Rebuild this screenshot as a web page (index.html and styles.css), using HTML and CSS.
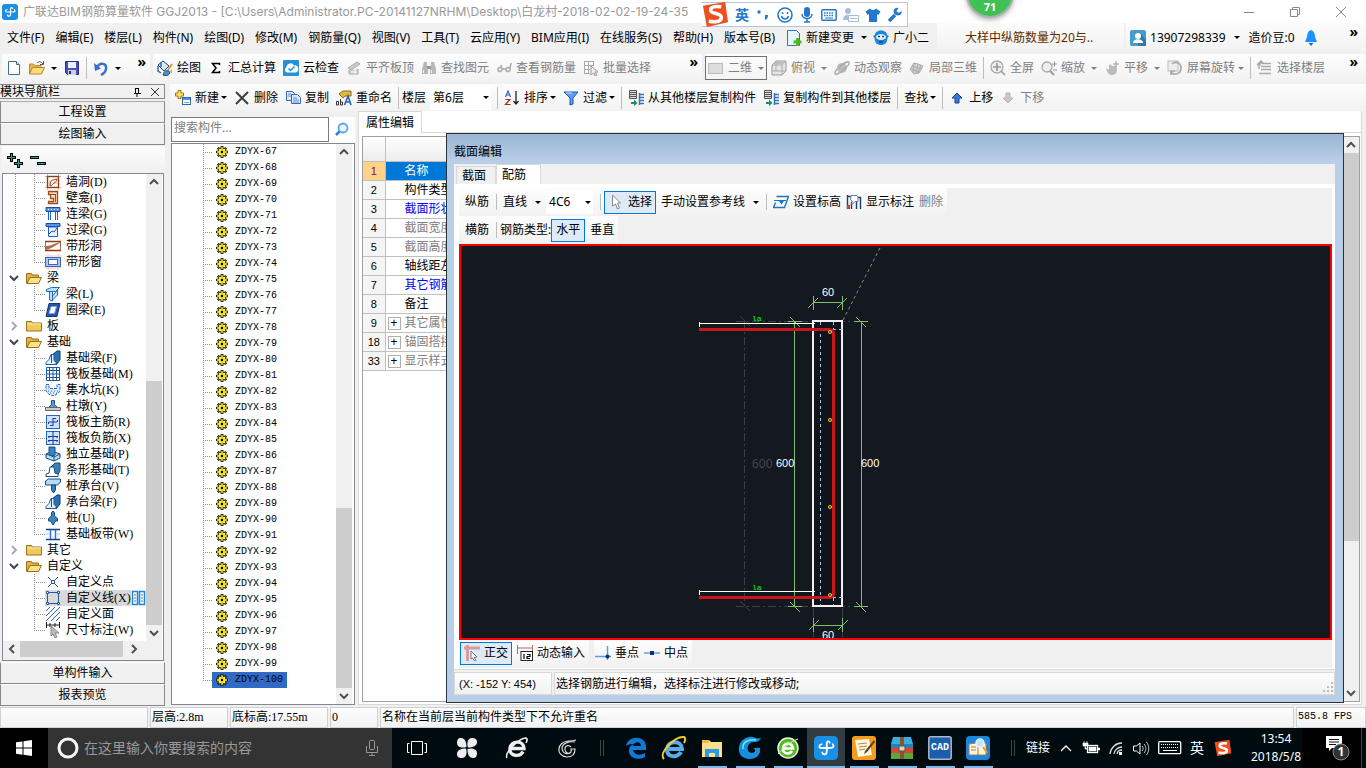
FILE: index.html
```
<!DOCTYPE html>
<html lang="zh-CN">
<head>
    <meta charset="UTF-8">
    <meta name="viewport" content="width=device-width, initial-scale=1.0">
    <title>广联达BIM钢筋算量软件 GGJ2013</title>
    <link rel="stylesheet" href="styles.css">
</head>
<body>
    <!-- icon sprite -->
    <svg class="sprite" aria-hidden="true">
        <symbol id="app" viewBox="0 0 16 16"><rect width="16" height="16" rx="3" fill="#1a8fe6"/><path d="M10.500 4.500C10 3 8.500 3.500 8.500 5v5.500c0 2-2.500 2.500-3 .5M5 5.500C3 6 3 8 5 8h5.500c2.500 0 3-1 2-2.500" fill="none" stroke="#fff" stroke-width="1.200" stroke-linecap="round"/></symbol>
        <symbol id="new" viewBox="0 0 16 16"><path d="M2.500 1.500h8l3 3v10h-11z" fill="#fff" stroke="#456a9c"/><path d="M10.500 1.500v3h3" fill="#cfe0f5" stroke="#456a9c"/></symbol>
        <symbol id="open" viewBox="0 0 16 16"><path d="M.5 14V4h4L6 5.500h6V8" fill="#e8b84a" stroke="#b8862c"/><path d="M.5 14l3-6.500h12l-3 6.500z" fill="#ffdb7a" stroke="#b8862c"/><path d="M8 3c2-2 4-1.500 6 1M14.500 1v3.500H11" fill="none" stroke="#555"/></symbol>
        <symbol id="save" viewBox="0 0 16 16"><path d="M1.500 1.500h13v13h-11l-2-2z" fill="#4a50b8" stroke="#2c2f80"/><rect x="4" y="2" width="8" height="6" fill="#e8f0fc"/><rect x="4" y="10" width="8" height="5" fill="#c9d0e8"/><rect x="5" y="11" width="2" height="3" fill="#2c2f80"/></symbol>
        <symbol id="undo" viewBox="0 0 16 16"><path d="M4 7c3-5 10-4 9 2-.5 3-3 5-5 6" fill="none" stroke="#3a6fd0" stroke-width="2.400"/><path d="M1 3l1 8 6-2.500z" fill="#3a6fd0"/></symbol>
        <symbol id="paint" viewBox="0 0 16 16"><path d="M1 5l5-4 6 5-5 5z" fill="#dce8f6" stroke="#23446c"/><path d="M4 2v5M1 6v5l3 2" fill="none" stroke="#3b6aa5" stroke-width="1.500"/><path d="M15 4l-4 6" stroke="#d3a02c" stroke-width="2"/><path d="M6 15c1-4 3-5 6-4l1 2c-2 3-4 3-7 2z" fill="#4a8fe0" stroke="#23446c"/><path d="M12 12l3-3v4z" fill="#ddb340"/></symbol>
        <symbol id="sigma" viewBox="0 0 16 16"><path d="M11.500 5V3.500H4.500L8 8l-3.500 4.500h7V11" fill="none" stroke="#000" stroke-width="1.500"/></symbol>
        <symbol id="cloud" viewBox="0 0 16 16"><rect width="16" height="16" rx="1" fill="#2591d8"/><path d="M4 12.500a3 3 0 0 1-.5-5.500A4 4 0 0 1 11 5.500a3.500 3.500 0 0 1 1.500 7z" fill="#fff"/><path d="M5.500 8.500l2 2 4-4" fill="none" stroke="#2591d8" stroke-width="1.500"/></symbol>
        <symbol id="align" viewBox="0 0 16 16"><path d="M2 8l9-6 3 2-9 6zM3 10v4h9V9" fill="#ccc" stroke="#aaa"/><path d="M5 12h6M9 9v5" stroke="#fff"/></symbol>
        <symbol id="find" viewBox="0 0 16 16"><path d="M3 2h3v3l1 3v6H1V9zM10 2h3l2 7v5H9V8l1-3z" fill="#b8b8b8"/><path d="M6 6h4v3H6z" fill="#999"/><path d="M2.500 10v3M10.500 10v3" stroke="#eee"/></symbol>
        <symbol id="glasses" viewBox="0 0 16 16"><path d="M6 9a2 2 0 1 0-4 1 2 2 0 0 0 4-1L5 5M14 9a2 2 0 1 0-4 1 2 2 0 0 0 4-1l1-6M6 9h4" fill="none" stroke="#aaa" stroke-width="1.500"/></symbol>
        <symbol id="batch" viewBox="0 0 16 16"><path d="M1 1.500h10M1 5.500h10M1 9.500h6M1 13.500h6M1.500 1v13M5.500 1v13M10.500 1v4" stroke="#aaa" fill="none"/><path d="M8 6l7 6h-3l2 3-2 1-1-3-3 2z" fill="#eee" stroke="#999"/></symbol>
        <symbol id="rect2d" viewBox="0 0 16 16"><rect x=".5" y="3.500" width="14" height="10" fill="#ddd" stroke="#bbb"/></symbol>
        <symbol id="cube" viewBox="0 0 16 16"><path d="M1 5l4-4h10v10l-4 4H1z" fill="#e6e6e6" stroke="#999"/><path d="M1 5h10v10M11 5l4-4M5 1v10H1M5 11h10" fill="none" stroke="#aaa"/><path d="M2 4l3-3h9l-3 3z" fill="#bbb"/></symbol>
        <symbol id="orbit" viewBox="0 0 16 16"><circle cx="8" cy="8" r="5" fill="#bcbcbc"/><ellipse cx="8" cy="8" rx="9" ry="2.500" transform="rotate(-40 8 8)" fill="none" stroke="#aaa" stroke-width="1.300"/></symbol>
        <symbol id="part3d" viewBox="0 0 16 16"><path d="M1 9l4-6 4 1 5 2-4 7-5 1z" fill="#d6d6d6" stroke="#aaa"/><path d="M5 3l-1 10M9 4l-2 9M3 6l10 3M2 9l9 3M12 5l-3 8" stroke="#aaa" fill="none"/></symbol>
        <symbol id="full" viewBox="0 0 16 16"><circle cx="7" cy="7" r="6" fill="#eee" stroke="#aaa" stroke-width="1.300"/><path d="M7 3v8M3 7h8M11 11l4 4" stroke="#999" stroke-width="1.700"/></symbol>
        <symbol id="zoom" viewBox="0 0 16 16"><circle cx="6" cy="7" r="5" fill="#eee" stroke="#aaa" stroke-width="1.300"/><path d="M9 11l4 4" stroke="#999" stroke-width="2"/><path d="M11 4h5M13.500 1.500v5M12 10h4" stroke="#999"/></symbol>
        <symbol id="hand" viewBox="0 0 16 16"><path d="M2 9c2-1 3 1 3 1V5c2-1 2 0 3 1 3-1 5 0 5 3 0 4-2 6-5 6s-4-2-6-6z" fill="#bbb"/><path d="M12 1v6M9 4h6" stroke="#999"/></symbol>
        <symbol id="rotate" viewBox="0 0 16 16"><rect x="1" y="1" width="10" height="10" fill="#eee" stroke="#bbb"/><path d="M4 12c3 4 10 2 10-4S8 1 5 4M4 15v-4h4" fill="none" stroke="#aaa" stroke-width="1.700"/></symbol>
        <symbol id="floors" viewBox="0 0 16 16"><path d="M0 5l4-4 2 2H3v2zM5 3.500h9M4 6.500h10M4 9.500h10M2 13.500h12M2 6v3" fill="#bbb" stroke="#aaa" stroke-width="1.500"/></symbol>
        <symbol id="add" viewBox="0 0 16 16"><path d="M3 .5h3V3h2.500v3H6v2.500H3V6H.5V3H3z" fill="#ffe066" stroke="#9a7a10"/><rect x="7.500" y="7.500" width="8" height="7" fill="#fff" stroke="#2c66b8"/><path d="M8 9h7" stroke="#4f91ea" stroke-width="2"/><path d="M9 12.500h5" stroke="#8aa"/></symbol>
        <symbol id="del" viewBox="0 0 16 16"><path d="M2 2l12 12M14 2L2 14" stroke="#3c3c44" stroke-width="2"/></symbol>
        <symbol id="copy" viewBox="0 0 16 16"><path d="M1.500 1.500h6l2 2v7h-8z" fill="#dce9fb" stroke="#3a68b0"/><path d="M6.500 4.500h6l3 3v6h-9z" fill="#dce9fb" stroke="#3a68b0"/><path d="M8 8h4M8 10h6M8 12h6M3 4h3M3 6h3" stroke="#5c8cd8"/></symbol>
        <symbol id="rename" viewBox="0 0 16 16"><path d="M3 4l4-3h8v5H9L7 8z" fill="#e2b93c" stroke="#876919"/><path d="M.5 15v-3.500h2V15zM4.500 9v6h2v-3h-2" fill="none" stroke="#333"/><path d="M8.500 15L12 6l3 9M10 12h4" fill="none" stroke="#2863bd" stroke-width="1.600"/></symbol>
        <symbol id="sort" viewBox="0 0 16 16"><path d="M1.500 7L4 1l2.500 6M2.500 5h3" fill="none" stroke="#3a62b5" stroke-width="1.200"/><path d="M1.500 9.500h4.500l-4.500 5h5" fill="none" stroke="#a02c2c" stroke-width="1.200"/><path d="M12 1v13M9.500 11l2.500 3 2.500-3" fill="none" stroke="#222" stroke-width="1.300"/></symbol>
        <symbol id="filter" viewBox="0 0 16 16"><path d="M1 2h14L10 8v6l-3 1V8z" fill="#5f9ef0" stroke="#1f58ac"/><path d="M3 3h6" stroke="#cfe3ff"/></symbol>
        <symbol id="floorcopy" viewBox="0 0 16 16"><path d="M1.500.5h7v8h-7z" fill="#ddd" stroke="#555"/><path d="M2 2.500h6M2 4.500h6M2 6.500h6" stroke="#555"/><path d="M3 12h3V9.500L9.500 13 6 16v-2H3z" fill="#14945a"/><path d="M11 4.500h5M11 7.500h5M11 10.500h5M11 13.500h5M11.500 3v12" stroke="#3872b8" stroke-width="1.500"/></symbol>
        <symbol id="up" viewBox="0 0 16 16"><path d="M8 3l5 5h-3v5H6V8H3z" fill="#3c78dc" stroke="#174291"/></symbol>
        <symbol id="down" viewBox="0 0 16 16"><path d="M8 13L3 8h3V3h4v5h3z" fill="#c9c9c9" stroke="#b5b5b5"/></symbol>
        <symbol id="change" viewBox="0 0 16 16"><path d="M1.500.5h9l3 3v12h-12z" fill="#e8f4fc" stroke="#2f77b0"/><path d="M10 8h3v2.500h2.500v3H13V16h-3v-2.500H7.500v-3H10z" fill="#55b82a"/></symbol>
        <symbol id="robot" viewBox="0 0 16 16"><path d="M2 5c0-6 12-6 12 0l2 1-1.500 2C14 13 12 15 8 15S2 13 1.500 8L0 6z" fill="#1c86d6"/><ellipse cx="8" cy="7" rx="5" ry="3" fill="#e4f4ff"/><path d="M5 6.500h2M9 6.500h2M6 12h4" stroke="#0a4d8c" stroke-width="1.500"/></symbol>
        <symbol id="user" viewBox="0 0 16 16"><rect width="16" height="16" rx="2" fill="#459ccb"/><path d="M8 8l4-3 4 5v6H8z" fill="#2f7ba6"/><circle cx="8" cy="6" r="3" fill="#fff"/><path d="M3 13c0-5 10-5 10 0z" fill="#fff"/></symbol>
        <symbol id="bell" viewBox="0 0 16 16"><path d="M8 0c-3 1-4 4-4 7l-2 5h12l-2-5c0-3-1-6-4-7z" fill="#1e90ff"/><path d="M5.500 13h5L8 16z" fill="#1770cc"/></symbol>
        <symbol id="search" viewBox="0 0 16 16"><circle cx="9" cy="6" r="4.500" fill="#eaf6ff" stroke="#54a6e4" stroke-width="1.800"/><path d="M5.500 9.500L2 13" stroke="#3182cc" stroke-width="2.500"/></symbol>
        <symbol id="gear" viewBox="0 0 16 16"><path d="M8 0v16M0 8h16M2.500 2.500l11 11M13.500 2.500l-11 11" stroke="#000" stroke-width="3.600"/><circle cx="8" cy="8" r="6" fill="#000"/><path d="M8 1v14M1 8h14M3.500 3.500l9 9M12.500 3.500l-9 9" stroke="#ffef28" stroke-width="1.800"/><circle cx="8" cy="8" r="4" fill="none" stroke="#ffef28" stroke-width="1.600"/><circle cx="8" cy="8" r="1.600" fill="#000"/></symbol>
        <symbol id="folder" viewBox="0 0 16 16"><path d="M.5 3.500h5l1 1.500h9v8H.5z" fill="#f2c75c" stroke="#99701c"/><path d="M1 6h14" stroke="#fff0bd"/></symbol>
        <symbol id="folder-open" viewBox="0 0 16 16"><path d="M.5 13.500v-10h5l1 1.500h6v3" fill="#e5b040" stroke="#99701c"/><path d="M1 13.500l3-6h11.500l-3 6z" fill="#ffe08a" stroke="#99701c"/></symbol>
        <!-- module tree -->
        <symbol id="t-hole" viewBox="0 0 16 16"><path d="M0 2.500h16M0 13.500h16M2.500 0v16M13.500 0v16" stroke="#ffb08a"/><rect x="2.500" y="2.500" width="11" height="11" fill="#fff" stroke="#8a3f18" stroke-width="1.400"/><path d="M3 9h4M9 9h4M5 6v3" stroke="#ffb08a"/><path d="M5 12c0-3 1-6 3-6s2-1 4-1c0 2-1 3-3 4s-1 2-4 3z" fill="#fff" stroke="#8a3f18"/></symbol>
        <symbol id="t-niche" viewBox="0 0 16 16"><path d="M3.500 1.500h9v12h-9v-2h5v-3h-3v-4h-2z" fill="#ffd9bd" stroke="#a14c1c" stroke-width="1.300"/><path d="M6 4.500h4M10.500 4v8" stroke="#a14c1c"/></symbol>
        <symbol id="t-beam" viewBox="0 0 16 16"><path d="M1 1.500h14v4H1z" fill="#5793e6" stroke="#1c4ea3"/><path d="M3.500 6v8M5.500 6v8M10.500 6v8M12.500 6v8" stroke="#1c60c9"/><path d="M3 3.500h1M6 3.500h1M9 3.500h1M12 3.500h1" stroke="#fff"/></symbol>
        <symbol id="t-lintel" viewBox="0 0 16 16"><path d="M1 1.500h14v3H1z" fill="#5793e6" stroke="#1c4ea3"/><path d="M3.500 5h9v9.500h-9z" fill="#e6f0ff" stroke="#1c60c9"/><path d="M4 12l3-3 2 1 3-4" fill="none" stroke="#1c60c9"/></symbol>
        <symbol id="t-striphole" viewBox="0 0 16 16"><path d="M0 3.500h16v9H0z" fill="#fff" stroke="#8a3f18" stroke-width="1.500"/><path d="M1 8c3 0 6-1 8-2s4-1 6-2v1c-4 2-9 6-14 7z" fill="#b56a3f"/></symbol>
        <symbol id="t-stripwin" viewBox="0 0 16 16"><path d="M0 2h16M0 14h16M3 0v16M13 0v16" stroke="#ffc4b8"/><rect x=".5" y="3.500" width="15" height="9" fill="#a9c8f7" stroke="#3a67bd"/><rect x="3.500" y="5.500" width="9" height="5" fill="#fff" stroke="#3a67bd"/></symbol>
        <symbol id="t-l" viewBox="0 0 16 16"><path d="M1.500 3.500l5-2h8l-4 4h-9zM4.500 6v8l3 1V6M7.500 10l5-6v5l-5 5" fill="#bfe0fa" stroke="#1c6fb9"/></symbol>
        <symbol id="t-ring" viewBox="0 0 16 16"><path d="M4 1.500h11L12 14.500H1z" fill="#2554a8" stroke="#123474"/><path d="M6 4.500h5.500L9.500 11.500H4z" fill="#fff" stroke="#76a5ee"/></symbol>
        <symbol id="t-fbeam" viewBox="0 0 16 16"><path d="M7 5l5-4h3v9l-4 5" fill="#2a6fae" stroke="#123e68"/><path d="M1 14.500v-2l3-3 2-5h3v6l2 2v2z" fill="#e3f1ff" stroke="#1c5a9c"/><path d="M6.500 5v8" stroke="#1c5a9c"/></symbol>
        <symbol id="t-raft" viewBox="0 0 16 16"><path d="M1.500 1.500h13v13h-13zM4.500 1v14M11.500 1v14M1 4.500h14M1 11.500h14M8 1v14M1 8h14" fill="none" stroke="#1c5a9c"/></symbol>
        <symbol id="t-pit" viewBox="0 0 16 16"><path d="M1 2.500h3v4h8v-4h3v6c-2 4-5 5-7 5s-5-1-7-5z" fill="#dcebff" stroke="#2c6bc4" stroke-dasharray="3 1"/><path d="M3 9h1M6 9h1M9 9h1M12 9h1M5 11h1M8 11h1M11 11h1" stroke="#2c6bc4"/></symbol>
        <symbol id="t-pier" viewBox="0 0 16 16"><path d="M6.500 2.500h3v4l3 3h-9l3-3z" fill="#5f93d3" stroke="#27508a"/><path d="M.5 9.500h15v3H.5z" fill="#ccc" stroke="#666"/></symbol>
        <symbol id="t-main" viewBox="0 0 16 16"><rect x="1.500" y="1.500" width="13" height="13" fill="#cfe2ff" stroke="#2b62cc"/><path d="M8 4v8M4 8h8M8 4.500h3M3.500 8v2M12.500 6v2M5 11.500h3" fill="none" stroke="#143f9e"/></symbol>
        <symbol id="t-neg" viewBox="0 0 16 16"><rect x="1.500" y="1.500" width="13" height="13" fill="#cfe2ff" stroke="#2b62cc"/><path d="M8 1v14M3 6.500h10M3 10.500h10M4 6v2M12 6v2M4 10v2M12 10v2" stroke="#143f9e"/></symbol>
        <symbol id="t-indep" viewBox="0 0 16 16"><path d="M1 8l6-3 8 3v4l-6 3-8-3z" fill="#b6dcf5" stroke="#164c7c"/><path d="M4 1h6v8l-3 1-3-2z" fill="#3c84c0" stroke="#164c7c"/><path d="M1 8l8 3 6-3M9 11v4" fill="none" stroke="#164c7c"/></symbol>
        <symbol id="t-strip" viewBox="0 0 16 16"><path d="M6 5l4-4h5v8l-3 5" fill="#3c7fb8" stroke="#164c7c"/><path d="M1 14.500V12l3-1 1-6h4l1 6 3 1v2.500z" fill="#fff" stroke="#164c7c"/></symbol>
        <symbol id="t-cap" viewBox="0 0 16 16"><path d="M.5 3l3-2h12v3l-3 3H.5z" fill="#b6dcf5" stroke="#164c7c"/><path d="M6.500 7h4v5l-2 3-2-3z" fill="#3c7fb8" stroke="#164c7c"/></symbol>
        <symbol id="t-pile" viewBox="0 0 16 16"><path d="M6.500 2.500L8 1l1.500 1.500V6l3 2.500V11h-2L8 15l-2.500-4h-2V8.500l3-2.500z" fill="#3c84c0" stroke="#164c7c"/></symbol>
        <symbol id="t-band" viewBox="0 0 16 16"><path d="M1 3.500h14M1 13.500h14" stroke="#163f86" stroke-width="1.500"/><path d="M5.500 4v9M10.500 4v9" stroke="#2b74d6" stroke-width="1.500"/><path d="M1 8h3M12 8h3" stroke="#9ac0f2"/></symbol>
        <symbol id="t-point" viewBox="0 0 16 16"><path d="M3 3l4 4M13 3L9 7M3 13l4-4M13 13L9 9" stroke="#2458b0"/><rect x="6.500" y="6.500" width="3" height="3" fill="#fff" stroke="#2458b0"/></symbol>
        <symbol id="t-line" viewBox="0 0 16 16"><path d="M2.500 2.500h11v11h-11z" fill="none" stroke="#2458b0"/><path d="M1.500 1.500h2v2h-2zM12.500 1.500h2v2h-2zM1.500 12.500h2v2h-2zM12.500 12.500h2v2h-2z" fill="#fff" stroke="#2458b0"/></symbol>
        <symbol id="t-area" viewBox="0 0 16 16"><path d="M1 5l4-4M1 10l9-9M1 15L15 1M6 15l9-9M11 15l4-4" stroke="#2b62cc"/></symbol>
        <symbol id="t-dim" viewBox="0 0 16 16"><path d="M1.500 0v6M14.500 0v6M2 3h12M5 1v4M10 1v4" stroke="#222"/><path d="M6 4l8 7h-4l2 4-2 1-2-4-2 2z" fill="#bbb" stroke="#888"/></symbol>
        <symbol id="cols" viewBox="0 0 16 16"><path d="M1.500 1.500h5v13h-5zM8.500 1.500h5v13h-5z" fill="#fff" stroke="#1c83d8" stroke-width="1.500"/><path d="M3 5h2M3 8h2M3 11h2M10 5h2M10 8h2M10 11h2" stroke="#1c83d8"/></symbol>
        <!-- section editor -->
        <symbol id="cursor" viewBox="0 0 16 16"><path d="M4.500 1v11l3-2 2 5 2-1-2-5h3z" fill="#fff" stroke="#888"/></symbol>
        <symbol id="level" viewBox="0 0 16 16"><path d="M3.500 2.500h12l-4 11H.5l2-5" fill="none" stroke="#1c75c4" stroke-width="1.400"/><path d="M1 6.500h12" stroke="#1c75c4"/><path d="M6 7h5l-2.500 3.500z" fill="#1c75c4"/></symbol>
        <symbol id="showdim" viewBox="0 0 16 16"><path d="M1.500 1v14M1 2.500h4M14.500 3v12M12 3.500h3M5.500 15V8M10.500 15V8" fill="none" stroke="#1c3c70" stroke-width="1.400"/><path d="M5 1.500h6l1 2v4H9l-3 3V7L4.500 6z" fill="#fff" stroke="#6a7ea0"/><path d="M1 11h3v4H1z" fill="#d2451e"/></symbol>
        <symbol id="ortho" viewBox="0 0 16 16"><path d="M0 3h16M3.500 0v16" stroke="#dc9a9a" stroke-width="3"/><path d="M7 6l6 6-3 .5 2 3-1.500.5-2-3L7 14z" fill="#fff" stroke="#777"/></symbol>
        <symbol id="dynin" viewBox="0 0 16 16"><path d="M.5 0v9M15.500 0v7M1 3h14" stroke="#a87272"/><rect x="4" y="6.500" width="11.500" height="9" fill="#fff" stroke="#222"/><path d="M7 9v5M10 9.500h3v2h-3v2h3" stroke="#000" fill="none" stroke-width="1.200"/></symbol>
        <symbol id="perp" viewBox="0 0 16 16"><path d="M0 11.500h16M12.500 1v14" stroke="#5a9ce6" stroke-width="1.400"/><circle cx="12.500" cy="11.500" r="2" fill="#0e2f86"/></symbol>
        <symbol id="mid" viewBox="0 0 16 16"><path d="M0 8h16" stroke="#5a9ce6" stroke-width="1.400"/><rect x="6" y="6" width="4" height="4" fill="#0e2f86"/></symbol>
    </svg>

    <header class="titlebar">
        <svg class="icon"><use href="#app"/></svg>
        <h1>广联达BIM钢筋算量软件 GGJ2013 - [C:\Users\Administrator.PC-20141127NRHM\Desktop\白龙村-2018-02-02-19-24-35</h1>
        <div class="window-buttons">
            <button aria-label="最小化"><svg width="12" height="12"><path d="M1 6.500h10" stroke="#888"/></svg></button>
            <button aria-label="还原"><svg width="12" height="12"><path d="M1.500 3.500h7v7h-7zM3.500 3V1.500h7v7H9" fill="none" stroke="#888"/></svg></button>
            <button aria-label="关闭"><svg width="12" height="12"><path d="M1 1l10 10M11 1L1 11" stroke="#888"/></svg></button>
        </div>
    </header>

    <!-- floating input method bar and assistant ball -->
    <div class="ime">
        <svg class="ime-logo" viewBox="0 0 28 28"><path d="M1 5L24 1l3 21-22 5z" fill="#f04e1e"/><path d="M20 6c-6-1-12 0-11 4s11 2 11 7-7 5-13 4" fill="none" stroke="#fff" stroke-width="3.600"/></svg>
        <b>英</b>
        <svg viewBox="0 0 16 16"><circle cx="4" cy="5" r="1.700" fill="#2478cc"/><path d="M10 8h3c0 3-1 4-3 5" fill="#2478cc"/></svg>
        <svg viewBox="0 0 16 16"><circle cx="8" cy="8" r="7" fill="none" stroke="#2478cc" stroke-width="1.600"/><path d="M5.500 5v2M10.500 5v2M4.500 9c1 4 6 4 7 0" fill="none" stroke="#2478cc" stroke-width="1.500"/></svg>
        <svg viewBox="0 0 16 16"><rect x="5" y="0" width="6" height="10" rx="3" fill="#2478cc"/><path d="M3 7c0 6 10 6 10 0M8 12v3M5 15h6" fill="none" stroke="#2478cc" stroke-width="1.500"/></svg>
        <svg viewBox="0 0 16 16"><rect x=".8" y="2.800" width="14.400" height="10.400" rx="1" fill="none" stroke="#2478cc" stroke-width="1.500"/><path d="M3 6h10M3 8.500h10" stroke="#2478cc" stroke-width="1.500" stroke-dasharray="1.500 1"/><path d="M4 11h8" stroke="#2478cc"/></svg>
        <svg viewBox="0 0 16 16"><circle cx="5" cy="4" r="3" fill="#a9bedb"/><path d="M0 13c0-7 9-7 10 0z" fill="#a9bedb"/><rect x="5.500" y="8.500" width="10" height="6" fill="#fff" stroke="#a9bedb"/><path d="M7 11.500h7" stroke="#a9bedb"/></svg>
        <svg viewBox="0 0 16 16"><path d="M5 1.500c2 2 4 2 6 0l4.500 3-2 3.500-1.500-1v8H4V7L2.500 8 .5 4.500z" fill="#2478cc"/></svg>
        <svg viewBox="0 0 16 16"><path d="M2 14l6-6" stroke="#2478cc" stroke-width="3.500"/><path d="M14.500 4l-3 2-2-2 2-3c-4-1-6 3-4 6 3 3 8 1 7-3z" fill="#2478cc"/></svg>
    </div>
    <div class="ball">71</div>

    <div class="menu-row">
        <nav class="menubar">
            <button>文件(F)</button><button>编辑(E)</button><button>楼层(L)</button><button>构件(N)</button><button>绘图(D)</button><button>修改(M)</button><button>钢筋量(Q)</button><button>视图(V)</button><button>工具(T)</button><button>云应用(Y)</button><button>BIM应用(I)</button><button>在线服务(S)</button><button>帮助(H)</button><button>版本号(B)</button>
            <button><svg class="icon"><use href="#change"/></svg>新建变更<i class="arrow"></i></button>
            <button><svg class="icon"><use href="#robot"/></svg>广小二</button>
        </nav>
        <div class="tip"><a href="#">大样中纵筋数量为20与..</a></div>
        <div class="account">
            <button class="phone"><svg class="icon"><use href="#user"/></svg>13907298339<i class="arrow"></i></button>
            <span>造价豆:0</span>
            <svg class="icon"><use href="#bell"/></svg>
            <button class="more">»</button>
        </div>
    </div>

    <div class="toolbar-row">
        <div class="toolbar files">
            <button aria-label="新建"><svg class="icon"><use href="#new"/></svg></button>
            <button aria-label="打开"><svg class="icon"><use href="#open"/></svg><i class="arrow"></i></button>
            <button aria-label="保存"><svg class="icon"><use href="#save"/></svg></button>
            <span class="sep"></span>
            <button aria-label="撤销"><svg class="icon"><use href="#undo"/></svg><i class="arrow"></i></button>
            <button class="more">»</button>
        </div>
        <div class="toolbar draw">
            <button><svg class="icon"><use href="#paint"/></svg>绘图</button>
            <button><svg class="icon"><use href="#sigma"/></svg>汇总计算</button>
            <button><svg class="icon"><use href="#cloud"/></svg>云检查</button>
            <button disabled><svg class="icon"><use href="#align"/></svg>平齐板顶</button>
            <button disabled><svg class="icon"><use href="#find"/></svg>查找图元</button>
            <button disabled><svg class="icon"><use href="#glasses"/></svg>查看钢筋量</button>
            <button disabled><svg class="icon"><use href="#batch"/></svg>批量选择</button>
            <button class="more">»</button>
        </div>
        <div class="toolbar view">
            <button class="mode" disabled><svg class="icon"><use href="#rect2d"/></svg>二维<i class="arrow"></i></button>
            <button disabled><svg class="icon"><use href="#cube"/></svg>俯视<i class="arrow"></i></button>
            <button disabled><svg class="icon"><use href="#orbit"/></svg>动态观察</button>
            <button disabled><svg class="icon"><use href="#part3d"/></svg>局部三维</button>
            <span class="sep"></span>
            <button disabled><svg class="icon"><use href="#full"/></svg>全屏</button>
            <button disabled><svg class="icon"><use href="#zoom"/></svg>缩放<i class="arrow"></i></button>
            <button disabled><svg class="icon"><use href="#hand"/></svg>平移<i class="arrow"></i></button>
            <button disabled><svg class="icon"><use href="#rotate"/></svg>屏幕旋转<i class="arrow near"></i></button>
            <span class="sep"></span>
            <button disabled><svg class="icon"><use href="#floors"/></svg>选择楼层</button>
            <button class="more">»</button>
        </div>
    </div>

    <main>
        <aside class="modules">
            <div class="panel-title">
                <h2>模块导航栏</h2>
                <button aria-label="固定"><svg width="10" height="10"><path d="M3.500 1v5M6.500 1v5M2 6.500h7M5 7v3M3 1.500h4" stroke="#000" fill="none"/></svg></button>
                <button aria-label="关闭"><svg width="10" height="10"><path d="M1 1l8 8M9 1L1 9" stroke="#333"/></svg></button>
            </div>
            <button class="section">工程设置</button>
            <button class="section">绘图输入</button>
            <div class="tree-tools">
                <button aria-label="全部展开"><svg width="16" height="16"><path d="M0 4.500h9M4.500 0v9M7 10.500h9M11.500 6v9" stroke="#000" stroke-width="3"/><path d="M1 4.500h7M4.500 1v7M8 10.500h7M11.500 7v7" stroke="#1aa79c"/></svg></button>
                <button aria-label="全部折叠"><svg width="16" height="16"><path d="M0 4.500h9M7 10.500h9" stroke="#000" stroke-width="3"/><path d="M1 4.500h7M8 10.500h7" stroke="#1aa79c"/></svg></button>
            </div>
            <div class="tree-box">
                <div class="tree-main">
                    <div class="tree" id="moduleTree"></div>
                    <div class="scroll-y">
                        <button aria-label="向上"><svg width="10" height="8"><path d="M1 6l4-4 4 4" /></svg></button>
                        <div class="track nav-track"><i></i></div>
                        <button aria-label="向下"><svg width="10" height="8"><path d="M1 2l4 4 4-4" /></svg></button>
                    </div>
                </div>
                <div class="scroll-x">
                    <button aria-label="向左"><svg width="8" height="10"><path d="M6 1L2 5l4 4" /></svg></button>
                    <div class="track"><i></i></div>
                    <button aria-label="向右"><svg width="8" height="10"><path d="M2 1l4 4-4 4" /></svg></button>
                </div>
            </div>
            <button class="section">单构件输入</button>
            <button class="section">报表预览</button>
        </aside>

        <div class="work">
            <div class="toolbar edit">
                <button><svg class="icon"><use href="#add"/></svg>新建<i class="arrow near"></i></button>
                <button><svg class="icon"><use href="#del"/></svg>删除</button>
                <button><svg class="icon"><use href="#copy"/></svg>复制</button>
                <button><svg class="icon"><use href="#rename"/></svg>重命名</button>
                <span class="sep"></span>
                <label for="floor">楼层</label>
                <span class="combo"><select id="floor"><option>第6层</option></select><i class="arrow"></i></span>
                <span class="sep"></span>
                <button><svg class="icon"><use href="#sort"/></svg>排序<i class="arrow near"></i></button>
                <button><svg class="icon"><use href="#filter"/></svg>过滤<i class="arrow near"></i></button>
                <span class="sep"></span>
                <button><svg class="icon"><use href="#floorcopy"/></svg>从其他楼层复制构件</button>
                <button><svg class="icon"><use href="#floorcopy"/></svg>复制构件到其他楼层</button>
                <span class="sep"></span>
                <button>查找<i class="arrow near"></i></button>
                <span class="sep"></span>
                <button><svg class="icon"><use href="#up"/></svg>上移</button>
                <button disabled><svg class="icon"><use href="#down"/></svg>下移</button>
            </div>
            <div class="panes">
                <section class="components">
                    <form class="search">
                        <input type="text" aria-label="搜索构件" placeholder="搜索构件...">
                        <button type="button" aria-label="搜索"><svg class="icon"><use href="#search"/></svg></button>
                    </form>
                    <div class="list-box">
                        <ul class="list" id="componentList"></ul>
                        <div class="scroll-y">
                            <button aria-label="向上"><svg width="10" height="8"><path d="M1 6l4-4 4 4" /></svg></button>
                            <div class="track list-track"><i></i></div>
                            <button aria-label="向下"><svg width="10" height="8"><path d="M1 2l4 4 4-4" /></svg></button>
                        </div>
                    </div>
                </section>
                <section class="properties">
                    <div class="tabs"><button class="active">属性编辑</button></div>
                    <div class="grid-box">
                        <table>
                            <thead><tr><th></th><th></th></tr></thead>
                            <tbody>
                                <tr class="current"><th>1</th><td>名称</td></tr>
                                <tr><th>2</th><td>构件类型</td></tr>
                                <tr class="blue"><th>3</th><td>截面形状</td></tr>
                                <tr class="gray"><th>4</th><td>截面宽度</td></tr>
                                <tr class="gray"><th>5</th><td>截面高度</td></tr>
                                <tr><th>6</th><td>轴线距左</td></tr>
                                <tr class="blue"><th>7</th><td>其它钢筋</td></tr>
                                <tr><th>8</th><td>备注</td></tr>
                                <tr class="gray"><th>9</th><td><button>+</button>其它属性</td></tr>
                                <tr class="gray"><th>18</th><td><button>+</button>锚固搭接</td></tr>
                                <tr class="gray"><th>33</th><td><button>+</button>显示样式</td></tr>
                            </tbody>
                        </table>
                        <div class="scroll-y">
                            <button aria-label="向上"><svg width="10" height="8"><path d="M1 6l4-4 4 4" /></svg></button>
                            <div class="track prop-track"><i></i></div>
                            <button aria-label="向下"><svg width="10" height="8"><path d="M1 2l4 4 4-4" /></svg></button>
                        </div>
                    </div>
                </section>
            </div>
        </div>

        <section class="dialog" role="dialog" aria-label="截面编辑">
            <h2>截面编辑</h2>
            <div class="dialog-body">
                <div class="dialog-tabs">
                    <button>截面</button>
                    <button class="active">配筋</button>
                </div>
                <div class="dialog-page">
                    <div class="dialog-tools">
                        <div class="toolbar">
                            <button>纵筋</button>
                            <span class="sep"></span>
                            <button>直线<i class="arrow"></i></button>
                            <span class="combo"><select aria-label="钢筋规格"><option>4C6</option></select><i class="arrow"></i></span>
                            <span class="sep"></span>
                            <button class="on"><svg class="icon"><use href="#cursor"/></svg>选择</button>
                            <button>手动设置参考线<i class="arrow"></i></button>
                            <span class="sep"></span>
                            <button><svg class="icon"><use href="#level"/></svg>设置标高</button>
                            <button><svg class="icon"><use href="#showdim"/></svg>显示标注</button>
                            <button disabled>删除</button>
                        </div>
                        <div class="toolbar">
                            <button>横筋</button>
                            <span class="sep"></span>
                            <span class="kind">钢筋类型:</span>
                            <button class="on">水平</button>
                            <button>垂直</button>
                        </div>
                    </div>
                    <svg class="canvas">
                        <!-- reference lines -->
                        <path d="M382 74l38-74" stroke="#8c8c8c" stroke-dasharray="3 3" fill="none"/>
                        <path d="M283.500 75v286M275 75.500h114M275 360.500h114" stroke="#3d424a" stroke-dasharray="8 3 2 3" fill="none"/>
                        <path d="M352.500 362v29M381.500 362v29M279 70l10 10M279 355l10 10" stroke="#3a3f48" fill="none"/>
                        <text class="faint" x="291" y="222">600</text>
                        <rect x="352" y="75" width="29" height="285" fill="#10131a" stroke="#f2eef2" stroke-width="2"/>
                        <path d="M359.500 76v284M372.500 76v8M372 83.500h9M372 351.500h9M372.500 352v8" stroke="#9fc8f2" stroke-dasharray="3 3" fill="none"/>
                        <!-- dimensions -->
                        <path d="M352 56.500h30M352.500 50v14M381.500 50v14M347 62l10-10M376 62l10-10M352 379.500h30M352.500 372v14M381.500 372v14M348 384l10-10M377 384l10-10M333.500 75v286M327 75.500h14M327 360.500h14M329 71l10 10M329 356l10 10M400.500 75v286M393 75.500h14M393 360.500h14M395 71l10 10M395 356l10 10" stroke="#7fbf6a" fill="none"/>
                        <!-- bars -->
                        <path d="M238.500 76v5M238 77.500h116M238.500 344v5M238 345.500h116" stroke="#fff" fill="none"/>
                        <path d="M238 83.500h130.500a4 4 0 0 1 4 4v260a4 4 0 0 1-4 4H238" stroke="#c8161d" stroke-width="3" fill="none"/>
                        <g fill="none" stroke="#ffd91a"><circle cx="369" cy="86" r="1.500"/><circle cx="369" cy="174" r="1.500"/><circle cx="369" cy="261" r="1.500"/><circle cx="369" cy="349" r="1.500"/></g>
                        <text x="361" y="50">60</text>
                        <text x="361" y="393">60</text>
                        <text x="315" y="221">600</text>
                        <text x="400" y="221">600</text>
                        <text class="anchor" x="291" y="75">la</text>
                        <text class="anchor" x="291" y="344">la</text>
                    </svg>
                    <div class="snap">
                        <div class="toolbar">
                            <button class="on"><svg class="icon"><use href="#ortho"/></svg>正交</button>
                            <button><svg class="icon"><use href="#dynin"/></svg>动态输入</button>
                        </div>
                        <div class="toolbar">
                            <button><svg class="icon"><use href="#perp"/></svg>垂点</button>
                            <button><svg class="icon"><use href="#mid"/></svg>中点</button>
                        </div>
                    </div>
                </div>
                <div class="dialog-status">
                    <span class="coords">(X: -152 Y: 454)</span>
                    <span class="message">选择钢筋进行编辑，选择标注进行修改或移动;</span>
                    <svg class="grip" width="12" height="12"><path d="M8 1h2v2H8zM4 5h2v2H4zM8 5h2v2H8zM0 9h2v2H0zM4 9h2v2H4zM8 9h2v2H8z" fill="#bbb"/></svg>
                </div>
            </div>
        </section>
    </main>

    <footer class="statusbar">
        <span></span>
        <span>层高:2.8m</span>
        <span>底标高:17.55m</span>
        <span>0</span>
        <span>名称在当前层当前构件类型下不允许重名</span>
        <span class="fps">585.8 FPS</span>
    </footer>

    <div class="taskbar">
        <button class="start" aria-label="开始"><svg width="16" height="16"><path d="M0 2.300L6.500 1.400V7.500H0zM7.500 1.200L16 0v7.500H7.500zM0 8.500h6.500v6.200L0 13.700zM7.500 8.500H16V16l-8.500-1.200z" fill="#fff"/></svg></button>
        <div class="ask">
            <svg width="22" height="22"><circle cx="11" cy="11" r="9" fill="none" stroke="#f5f5f5" stroke-width="3"/></svg>
            <input type="text" aria-label="搜索" placeholder="在这里输入你要搜索的内容">
            <svg width="12" height="18"><rect x="3.500" y="1.500" width="5" height="9" rx="1" fill="none" stroke="#999"/><path d="M.5 7v6.500h11V7M6 14v3M3 16.500h6" fill="none" stroke="#999"/></svg>
        </div>
        <div class="pinned">
            <button aria-label="任务视图"><svg width="22" height="16"><path d="M5.500 1.500h11v13h-11zM3.500 3.500h-2v9h2M18.500 3.500h2v9h-2" fill="none" stroke="#fff"/></svg></button>
            <button aria-label="浏览器"><svg width="24" height="24"><g fill="#eee"><path d="M11.500 11C7 12.500 2 11 2 7c0-3 1-5 4-5 4 0 5.500 4 5.500 9zM13 11.500C11.500 7 13 2 17 2c3 0 5 1 5 4 0 4-4 5.500-9 5.500zM12.500 13c4.500-1.500 9.500 0 9.500 4 0 3-1 5-4 5-4 0-5.500-4-5.500-9zM11 12.500c1.500 4.500 0 9.500-4 9.500-3 0-5-1-5-4 0-4 4-5.500 9-5.500z"/></g></svg></button>
            <button aria-label="浏览器 e"><svg width="24" height="24"><path d="M5 12.500h14c0-8-13-9-14 0-1 8 10 9 13 3" fill="none" stroke="#eee" stroke-width="3.400"/><path d="M2 22C-1 17 14 2 21 2c2 1 1 3 0 5" fill="none" stroke="#eee" stroke-width="1.500"/></svg></button>
            <button aria-label="广联达"><svg width="22" height="22"><path d="M20 3c-3 1-5 1-8 1-11 1-13 15-1 16 6 0 8-4 8-8h-4c2 6-7 6-6-1 1-3 4-3 6-1M19 5C13 4 6 6 6 12c1 5 6 6 9 3" fill="none" stroke="#ddd" stroke-width="1.200"/></svg></button>
        </div>
        <span class="bars"></span>
        <div class="apps">
            <button aria-label="Edge"><svg width="24" height="24"><path d="M2 10C4-1 22-1 22 11v3H9c1 5 7 6 12 3v4c-7 4-17 1-16-7 0-3 2-5 5-6-5 0-7 1-8 2zM9 10h8c0-5-7-5-8 0z" fill="#0f7ad8"/></svg></button>
            <button aria-label="Internet Explorer"><svg width="26" height="26"><path d="M7 14h14c0-9-14-9-15 0-1 9 11 9 14 3" fill="none" stroke="#55aee8" stroke-width="4"/><path d="M3 24C-3 18 14 1 23 2c2 1 1 4 0 6" fill="none" stroke="#f7cc2c" stroke-width="2"/></svg></button>
            <button class="run" aria-label="资源管理器"><svg width="22" height="22"><path d="M1 3h7l2 2h11v15H1z" fill="#fce08e"/><path d="M1 3h7v3H1z" fill="#eebc3c"/><path d="M4 20v-8h14v8h-4v-4H8v4z" fill="#2d9bdf"/></svg></button>
            <button class="run" aria-label="广联达G+"><svg width="24" height="24"><path d="M23 2c-2 4-4 4-8 4-7 1-7 11-1 11 4 0 4-4 1-5h7c1 7-4 11-10 11C4 23 0 18 1 11 2 4 9 0 15 1c3 1 5 2 8 1z" fill="#1590dd"/><path d="M18 4C10 3 4 6 5 13" fill="none" stroke="#7fe1ff" stroke-width="1.500"/></svg></button>
            <button class="run" aria-label="安全浏览器"><svg width="24" height="24"><circle cx="12" cy="12" r="10" fill="#54ba24" stroke="#e9f8df" stroke-width="1.500"/><path d="M7 12.500h10c-1-7-10-6-10 0s7 6 9 2.500" fill="none" stroke="#fff" stroke-width="2.600"/><path d="M2 18C8 12 15 5 22 3" stroke="#d6f5a3" fill="none"/></svg></button>
            <button class="run current" aria-label="GGJ2013"><svg width="24" height="24" viewBox="0 0 16 16"><use href="#app"/></svg></button>
            <button class="run" aria-label="便签"><svg width="24" height="24"><rect x="0" y="0" width="24" height="24" rx="3" fill="#f59a1c"/><path d="M3 4l14-1 3 16-14 2z" fill="#fff8e0"/><path d="M6 8l9-1M7 11l8-1M7 14l6-1" stroke="#b78444"/><path d="M22 4l-9 11-1 3 3-2 8-10z" fill="#614026"/></svg></button>
            <button class="run" aria-label="WinRAR"><svg width="24" height="24"><path d="M3 1h18l2 7H1z" fill="#3daee0"/><path d="M1 8h22v4H1z" fill="#2582b8"/><path d="M1 12h22v5H1z" fill="#d9472f"/><path d="M1 17h22v6H1z" fill="#54a83c"/><path d="M10 1h4v22h-4z" fill="#8a5434"/><path d="M9 10h6v5H9z" fill="#e0d2b8" stroke="#555"/></svg></button>
            <button class="run cad"><svg width="24" height="24"><rect x=".8" y=".8" width="22.400" height="22.400" rx="2" fill="#1a5fae" stroke="#aeb7c2" stroke-width="1.500"/></svg><b>CAD</b></button>
            <button class="run" aria-label="图集"><svg width="24" height="24"><rect width="24" height="24" rx="4" fill="#1b86dd"/><path d="M3 8l8-1 1 1 8-1v12H3z" fill="#fff4dc" stroke="#a97b4c"/><path d="M12 8v11M5 11h5M5 14h5" stroke="#a97b4c"/><circle cx="14" cy="7" r="4" fill="#bfe4ff" stroke="#e8f5ff" stroke-width="1.500"/><path d="M17 11l4 6" stroke="#f0a030" stroke-width="2"/></svg></button>
        </div>
        <div class="tray">
            <span class="bars"></span>
            <span class="links">链接</span>
            <svg width="16" height="16"><path d="M3 11l5-5 5 5" fill="none" stroke="#fff" stroke-width="1.300"/></svg>
            <svg width="18" height="16"><rect x="5.500" y="5.500" width="10" height="7" fill="#000b0f" stroke="#fff" stroke-width="1.300"/><path d="M7 7h7v4H7zM16 8h2v2h-2zM1 3h5v3H1zM3 6v3h2M2 1v2M5 1v2" fill="#fff" stroke="#fff" stroke-width=".6"/></svg>
            <svg width="16" height="16"><path d="M2 14A12 12 0 0 1 14 3M6 14a8 8 0 0 1 8-7M9 14a5 5 0 0 1 5-4" fill="none" stroke="#ddd" stroke-width="1.300"/><path d="M11 12h3v3h-3z" fill="#fff"/></svg>
            <svg width="18" height="16"><path d="M1.500 6h3l3.500-3v11l-3.500-3h-3z" fill="none" stroke="#fff"/><path d="M10 6c1.500 2 1.500 3 0 5M12 4c2.500 3 2.500 6 0 9M14.500 2c3 4 3 9 0 13" fill="none" stroke="#ccc"/></svg>
            <svg width="24" height="16"><rect x=".7" y="1.700" width="22" height="12" rx="1" fill="none" stroke="#fff" stroke-width="1.300"/><path d="M3 4.500h18M3 7.500h18" stroke="#fff" stroke-dasharray="1 1"/><path d="M5 10.500h14" stroke="#fff"/></svg>
            <span class="lang">英</span>
            <svg width="18" height="18" viewBox="0 0 28 28"><path d="M1 5L24 1l3 21-22 5z" fill="#f04e1e"/><path d="M20 7c-6-1-12 0-11 4s11 2 11 7-7 4-13 3" fill="none" stroke="#fff" stroke-width="4"/></svg>
            <time><span>13:54</span><span>2018/5/8</span></time>
        </div>
        <button class="notice" aria-label="通知"><svg width="24" height="26"><path d="M0 1h16v12H6l-3 3v-3H0z" fill="#fff"/><path d="M3 4.500h10M3 7h10M3 9.500h7" stroke="#111"/><circle cx="15" cy="17" r="8" fill="#333" stroke="#888"/></svg><b>1</b></button>
    </div>

    <script>
        // [group, open, [[icon, label], ...]]; a group without a name continues above the view
        const modules = [
            ['', true, [['hole', '墙洞(D)'], ['niche', '壁龛(I)'], ['beam', '连梁(G)'], ['lintel', '过梁(G)'], ['striphole', '带形洞'], ['stripwin', '带形窗']]],
            ['梁', true, [['l', '梁(L)'], ['ring', '圈梁(E)']]],
            ['板', false, []],
            ['基础', true, [['fbeam', '基础梁(F)'], ['raft', '筏板基础(M)'], ['pit', '集水坑(K)'], ['pier', '柱墩(Y)'], ['main', '筏板主筋(R)'], ['neg', '筏板负筋(X)'], ['indep', '独立基础(P)'], ['strip', '条形基础(T)'], ['cap', '桩承台(V)'], ['fbeam', '承台梁(F)'], ['pile', '桩(U)'], ['band', '基础板带(W)']]],
            ['其它', false, []],
            ['自定义', true, [['point', '自定义点'], ['line', '自定义线(X)'], ['area', '自定义面'], ['dim', '尺寸标注(W)']]]
        ];

        function icon(name) {
            return '<svg class="icon"><use href="#' + name + '"/></svg>';
        }

        let tree = '';
        modules.forEach(function(group) {
            if (group[0]) {
                const chevron = group[1] ? '<path d="M1 3l4 4 4-4"/>' : '<path d="M3 1l4 4-4 4"/>';
                tree += '<div class="group ' + (group[1] ? 'open' : '') + '"><svg class="chevron" width="10" height="10">' + chevron + '</svg>' + icon(group[1] ? 'folder-open' : 'folder') + group[0] + '</div>';
            }
            tree += '<ul>';
            group[2].forEach(function(item) {
                const selected = item[0] === 'line';
                tree += '<li><span class="' + (selected ? 'selected' : '') + '">' + icon('t-' + item[0]) + item[1] + '</span>' + (selected ? icon('cols') : '') + '</li>';
            });
            tree += '</ul>';
        });
        document.getElementById('moduleTree').innerHTML = tree;

        let list = '';
        for (let i = 67; i <= 100; i++) {
            list += '<li><span class="' + (i === 100 ? 'selected' : '') + '">' + icon('gear') + 'ZDYX-' + i + '</span></li>';
        }
        document.getElementById('componentList').innerHTML = list;
    </script>
</body>
</html>
```
FILE: styles.css
```
* {
    box-sizing: border-box;
}
body {
    display: flex;
    flex-direction: column;
    height: 100vh;
    margin: 0;
    overflow: hidden;
    background-color: #f0f0f0;
    color: #000;
    font-family: "Noto Sans", "Noto Sans CJK SC", sans-serif;
    font-size: 12px;
    line-height: 16px;
}
button, input, select {
    font: inherit;
    color: inherit;
    border: none;
    background: none;
    padding: 0;
    margin: 0;
}
button {
    display: flex;
    align-items: center;
    white-space: nowrap;
}
button:disabled {
    color: #808080;
}
h1, h2 {
    margin: 0;
    font-size: 12px;
    font-weight: normal;
}
ul {
    list-style: none;
    margin: 0;
    padding: 0;
}
svg {
    display: block;
    flex: none;
}
.sprite {
    position: absolute;
    width: 0;
    height: 0;
}
.icon {
    width: 16px;
    height: 16px;
}
.arrow {
    border: 3px solid transparent;
    border-top-color: currentColor;
    border-bottom: none;
    margin: 0 0 0 8px;
}
.arrow.near {
    margin: 0 0 0 2px;
}
.sep {
    width: 1px;
    height: 22px;
    background-color: #bdbdbd;
    flex: none;
}

/* title bar */
.titlebar {
    display: flex;
    align-items: center;
    flex: none;
    height: 23px;
    padding-left: 2px;
    background-color: #fff;
    color: #999;
}
.titlebar h1 {
    flex: 1;
    margin-left: 5px;
    font-family: Inter, "Noto Sans CJK SC", sans-serif;
    white-space: nowrap;
}
.window-buttons {
    display: flex;
    gap: 34px;
    padding-right: 19px;
}
.ime {
    position: absolute;
    left: 702px;
    top: 2px;
    display: flex;
    align-items: center;
    gap: 6px;
    height: 25px;
    padding-right: 4px;
    border: 1px solid #b9c7d6;
    border-left: none;
    background-color: #fff;
    color: #2478cc;
}
.ime b {
    font-size: 14px;
}
.ime svg {
    width: 16px;
    height: 16px;
}
.ime .ime-logo {
    width: 27px;
    height: 27px;
}
.ball {
    position: absolute;
    left: 966px;
    top: -30px;
    width: 48px;
    height: 48px;
    padding-top: 28px;
    border: 2px solid #aab3aa;
    border-radius: 50%;
    background-color: #3fc156;
    box-shadow: 0 2px 5px rgba(0, 0, 0, 0.3);
    color: #fff;
    font-size: 11px;
    font-weight: bold;
    line-height: 14px;
    text-align: center;
}

/* menu */
.menu-row {
    display: flex;
    flex: none;
    gap: 2px;
    height: 31px;
}
.menubar {
    display: flex;
    align-items: center;
    gap: 11px;
    padding: 0 6px 2px 7px;
}
.menubar .icon, .account .phone .icon {
    margin-right: 4px;
}
.menubar .arrow {
    margin: 0 -5px 0 7px;
}
.tip, .account {
    display: flex;
    align-items: center;
    height: 29px;
    background: linear-gradient(#fcfcfc, #f2f2f2);
}
.tip {
    width: 187px;
    padding-left: 28px;
}
.tip a {
    color: #5a2b00;
    text-decoration: none;
}
.account {
    flex: 1;
    padding: 0 8px 0 4px;
}
.account .phone {
    margin-right: 9px;
}
.account > .icon {
    margin-left: 8px;
}
.more {
    margin-left: auto;
    padding-bottom: 12px;
    font-size: 14px;
    font-weight: bold;
}

/* toolbars */
.toolbar-row {
    display: flex;
    flex: none;
    gap: 3px;
    height: 30px;
    padding-left: 2px;
}
.toolbar {
    display: flex;
    align-items: center;
    gap: 7px;
    height: 28px;
    padding: 0 4px;
    background: linear-gradient(#fdfdfd, #f2f2f2);
}
.toolbar button .icon {
    margin-right: 4px;
}
.toolbar .sep {
    margin: 0 -1px;
}
.files {
    width: 148px;
}
.files button .icon {
    margin-right: 0;
}
.files .arrow, .view .arrow {
    margin-left: 6px;
}
.draw {
    width: 549px;
}
.view {
    flex: 1;
    padding: 0 8px 0 0;
}
.view .mode {
    height: 24px;
    width: 62px;
    padding: 0 2px;
    border: 1px solid #707070;
    margin-right: -3px;
}
.view .near {
    margin-left: 3px;
}
.combo {
    display: flex;
    align-items: center;
    height: 24px;
    padding-right: 2px;
    background-color: #fff;
}
.combo select {
    width: 53px;
    padding-left: 3px;
    appearance: none;
}
.combo .arrow {
    margin-left: 0;
}

/* module navigation */
main {
    position: relative;
    display: flex;
    flex: 1;
    min-height: 0;
}
.modules {
    display: flex;
    flex-direction: column;
    flex: none;
    width: 165px;
}
.panel-title {
    display: flex;
    align-items: center;
    gap: 8px;
    flex: none;
    height: 15px;
    padding-right: 4px;
    border: 1px solid #888;
    border-left: none;
}
.panel-title h2 {
    flex: 1;
    font-family: "Liberation Serif", "Noto Sans CJK SC", serif;
}
.section {
    justify-content: center;
    flex: none;
    height: 22px;
    border-left: 1px solid #888;
    border-right: 1px solid #888;
    border-bottom: 1px solid #888;
    border-top: 1px solid #fff;
}
.panel-title + .section {
    margin-top: 2px;
    border-top-color: #aaa;
}
.tree-tools {
    display: flex;
    gap: 7px;
    flex: none;
    height: 27px;
    padding: 2px 0 0 5px;
    margin: 1px 0 0 2px;
    background: linear-gradient(#fdfdfd, #f0f0f0);
}
.tree-box {
    display: flex;
    flex-direction: column;
    flex: 1;
    min-height: 0;
    margin: 0 1px 1px 2px;
    padding-right: 1px;
    border: 1px solid #828790;
    background-color: #fff;
}
.tree-main {
    display: flex;
    flex: 1;
    min-height: 0;
}
.tree {
    flex: 1;
    min-width: 0;
    overflow: hidden;
    font-family: "Liberation Serif", "Noto Sans CJK SC", serif;
    white-space: nowrap;
}
.tree ul {
    background: repeating-linear-gradient(#909090 0 1px, transparent 1px 2px) 12px 0 / 1px 100% no-repeat;
}
.tree ul:last-child {
    background: none;
}
.tree li, .tree li span, .list li, .list li span, .group {
    display: flex;
    align-items: center;
    height: 16px;
}
.tree li::before, .list li::before {
    content: "";
    flex: none;
    width: 11px;
    height: 16px;
    margin-left: 31px;
    background:
        repeating-linear-gradient(#909090 0 1px, transparent 1px 2px) 0 0 / 1px 100% no-repeat,
        repeating-linear-gradient(to right, #909090 0 1px, transparent 1px 2px) 0 8px / 100% 1px no-repeat;
}
.list li::before {
    width: 9px;
}
.tree li:last-child::before, .list li:last-child::before {
    background-size: 1px 9px, 100% 1px;
}
.tree li .icon {
    margin-right: 5px;
}
.tree li .selected {
    background-color: #d9d9d9;
}
.tree li > .icon {
    margin-right: 0;
}
.group .chevron {
    margin: 0 7px 0 6px;
    fill: none;
    stroke: #aaa;
    stroke-width: 2;
}
.group.open .chevron {
    stroke: #444;
}
.group .icon {
    margin-right: 5px;
}

/* scroll bars */
.scroll-y, .scroll-x {
    display: flex;
    flex: none;
    background-color: #f0f0f0;
}
.scroll-y {
    flex-direction: column;
    width: 16px;
}
.scroll-x {
    height: 19px;
    padding: 0 17px 3px 1px;
}
.scroll-y button, .scroll-x button {
    justify-content: center;
    flex: none;
    width: 16px;
    height: 16px;
}
.scroll-x button:last-child {
    width: 22px;
}
.scroll-y path, .scroll-x path {
    fill: none;
    stroke: #505050;
    stroke-width: 2;
}
.track {
    display: flex;
    flex: 1;
}
.scroll-y .track {
    flex-direction: column;
}
.track i {
    flex: 1;
    background-color: #cdcdcd;
}
.nav-track::before {
    content: "";
    flex: 0 0 44%;
}
.list-track::before {
    content: "";
    flex: 0 0 66%;
}
.prop-track::after {
    content: "";
    flex: 0 0 27%;
}

/* work area */
.work {
    display: flex;
    flex-direction: column;
    flex: 1;
    min-width: 0;
    margin-left: 5px;
}
.edit {
    flex: none;
    height: 27px;
    padding-left: 5px;
}
.edit label {
    margin: 0 -3px;
}
.panes {
    display: flex;
    flex: 1;
    min-height: 0;
}
.components {
    display: flex;
    flex-direction: column;
    flex: none;
    width: 185px;
    padding: 6px 0 1px 1px;
}
.search {
    display: flex;
    flex: none;
    height: 26px;
    background-color: #fff;
}
.search input {
    width: 158px;
    height: 25px;
    padding: 0 2px 4px;
    border: 1px solid #7a7a7a;
}
.search input::placeholder {
    color: #808080;
    opacity: 1;
}
.search button {
    flex: 1;
    justify-content: center;
}
.list-box {
    display: flex;
    flex: 1;
    min-height: 0;
    padding-right: 2px;
    border: 1px solid #828790;
    background-color: #fff;
}
.list {
    flex: 1;
    overflow: hidden;
    font-family: "Liberation Mono", monospace;
    font-size: 10px;
}
.list li .icon {
    width: 12px;
    height: 12px;
    margin: 0 7px 0 4px;
}
.list li .selected {
    padding-right: 4px;
    background-color: #316ac5;
}
.properties {
    display: flex;
    flex-direction: column;
    flex: 1;
    min-width: 0;
    margin: 0 4px 1px 3px;
    border: 1px solid #d9d9d9;
    border-top: none;
    background-color: #fff;
}
.tabs {
    display: flex;
    flex: none;
    height: 22px;
    border-bottom: 1px solid #d9d9d9;
}
.tabs button {
    height: 22px;
    padding: 0 7px;
    border: 1px solid #d9d9d9;
    border-left: none;
    border-bottom: none;
    background-color: #fff;
}
.grid-box {
    display: flex;
    flex: 1;
    min-height: 0;
    justify-content: space-between;
    align-items: stretch;
    margin: 3px 1px 2px 3px;
    border: 1px solid #a0a0a0;
}
table {
    align-self: flex-start;
    width: 100%;
    table-layout: fixed;
    border-collapse: collapse;
}
th, td {
    height: 19px;
    padding: 0;
    border-bottom: 1px solid #c0c0c0;
    font-weight: normal;
    line-height: 18px;
}
thead th {
    height: 24px;
    background: linear-gradient(#fff, #ececec);
}
th {
    width: 22px;
    border-right: 1px solid #c0c0c0;
    background-color: #f5f5f5;
    font-family: "Liberation Sans", sans-serif;
    font-size: 11px;
}
thead th + th {
    width: auto;
}
td {
    padding-left: 19px;
}
td button {
    display: inline-block;
    width: 13px;
    height: 13px;
    margin: 0 4px 0 -17px;
    border: 1px solid #b0b0b0;
    color: #000;
    line-height: 10px;
    text-align: center;
    vertical-align: middle;
}
.current th {
    background-color: #ffd28a;
    color: #800060;
}
.current td {
    background-color: #0078d7;
    color: #fff;
}
.blue td {
    color: #00f;
}
.gray td {
    color: #808080;
}

/* section editor */
.dialog {
    position: absolute;
    left: 446px;
    right: 22px;
    top: 49px;
    bottom: 3px;
    display: flex;
    flex-direction: column;
    padding: 0 8px 7px 7px;
    border: 1px solid #26323c;
    background: linear-gradient(#9ab4d2, #b9cfe8 28px);
}
.dialog h2 {
    flex: none;
    height: 30px;
    padding-top: 10px;
}
.dialog-body {
    display: flex;
    flex-direction: column;
    flex: 1;
    min-height: 0;
    background-color: #f0f0f0;
}
.dialog-tabs {
    display: flex;
    align-items: flex-end;
    flex: none;
    height: 20px;
    padding-left: 2px;
}
.dialog-tabs button {
    width: 40px;
    height: 18px;
    padding-left: 5px;
    border: 1px solid #d9d9d9;
    border-bottom: none;
}
.dialog-tabs .active {
    width: 45px;
    height: 20px;
    background-color: #fff;
}
.dialog-page {
    display: flex;
    flex-direction: column;
    flex: 1;
    min-height: 0;
    padding: 4px 3px 1px 5px;
    margin-bottom: 2px;
    border-bottom: 1px solid #d9d9d9;
    background-color: #fff;
}
.dialog-tools, .snap {
    display: flex;
    flex: none;
    background-color: #f0f0f0;
}
.dialog-tools {
    flex-direction: column;
    align-items: flex-start;
    height: 56px;
}
.dialog .toolbar {
    gap: 5px;
    padding-left: 6px;
}
.dialog .toolbar .sep {
    margin: 0 1px 0 2px;
    height: 16px;
}
.dialog .combo select {
    width: 39px;
}
.kind {
    margin: 0 -5px 0 -3px;
}
.toolbar .on {
    height: 23px;
    padding: 0 3px;
    border: 1px solid #0078d7;
    background-color: #deebf7;
}
.toolbar .sep + .on {
    margin-left: -3px;
}
.kind + .on {
    padding: 0 4px;
}
.canvas {
    flex: 1;
    width: 100%;
    min-height: 0;
    border: 2px solid #f00;
    background-color: #14181f;
    overflow: hidden;
}
.canvas text {
    fill: #fff;
    font-family: "Liberation Sans", sans-serif;
    font-size: 11px;
}
.canvas .faint {
    fill: #454a52;
    font-family: "Open Sans", sans-serif;
    font-size: 12px;
}
.canvas .anchor {
    fill: #0f0;
    font-family: "Liberation Mono", monospace;
    font-size: 8px;
}
.snap {
    gap: 5px;
}
.dialog .snap .toolbar {
    height: 26px;
    margin-bottom: 2px;
    padding: 0 4px 0 1px;
}
.dialog-status {
    display: flex;
    gap: 2px;
    flex: none;
    height: 23px;
}
.dialog-status span {
    padding: 3px 4px 0;
    border: 1px solid #d9d9d9;
    background: linear-gradient(#fdfdfd, #f2f2f2);
}
.dialog-status .coords {
    width: 98px;
    font-family: "Liberation Sans", sans-serif;
    font-size: 11px;
}
.dialog-status .message {
    flex: 1;
    padding-left: 1px;
}
.grip {
    align-self: flex-end;
    margin: 0 0 2px -14px;
}

/* status bar */
.statusbar {
    display: grid;
    grid-template-columns: 148px 78px 98px 48px 1fr 70px;
    gap: 2px;
    flex: none;
    height: 22px;
    padding: 1px 0 0;
    font-family: "Liberation Serif", "Noto Sans CJK SC", serif;
}
.statusbar span {
    padding: 1px;
    border: 1px solid #d0d0d0;
    background: linear-gradient(#fdfdfd, #f2f2f2);
    white-space: nowrap;
}
.statusbar .fps {
    font-family: "Liberation Mono", monospace;
    font-size: 10px;
}

/* taskbar */
.taskbar {
    display: flex;
    flex: none;
    height: 40px;
    background-color: #000b0f;
    color: #fff;
}
.taskbar button {
    justify-content: center;
}
.start {
    width: 48px;
    background-color: #000;
}
.ask {
    display: flex;
    align-items: center;
    width: 344px;
    padding: 0 14px 0 9px;
    background-color: #333;
}
.ask input {
    flex: 1;
    min-width: 0;
    margin-left: 5px;
    font-size: 14px;
}
.ask input::placeholder {
    color: #999;
    opacity: 1;
}
.pinned {
    display: flex;
}
.pinned button {
    width: 50px;
}
.bars {
    align-self: center;
    width: 4px;
    height: 16px;
    margin: 0 13px 0 8px;
    border: 1px solid #444;
    border-top: none;
    border-bottom: none;
}
.apps {
    display: flex;
}
.apps button {
    width: 38px;
}
.apps .run {
    background: linear-gradient(#76b9ed, #76b9ed) center bottom / 29px 2px no-repeat;
}
.apps .current {
    background: linear-gradient(#76b9ed, #76b9ed) center bottom / 100% 2px no-repeat #333c40;
}
.cad b {
    width: 24px;
    margin-left: -24px;
    font-family: "Liberation Mono", monospace;
    font-size: 10px;
    text-align: center;
}
.tray {
    display: flex;
    align-items: center;
    gap: 8px;
    margin-left: auto;
}
.tray .bars {
    margin: 0 3px 0 0;
}
.lang {
    margin-right: 2px;
    font-size: 14px;
}
.tray time {
    display: flex;
    flex-direction: column;
    align-items: center;
    gap: 2px;
    width: 52px;
    margin-left: 10px;
}
.notice {
    width: 60px;
    border-right: 1px solid #444;
    margin-right: 4px;
    background-color: #000;
}
.notice svg {
    margin-left: 12px;
}
.notice b {
    width: 16px;
    margin: 8px 0 0 -17px;
    text-align: center;
}
```
